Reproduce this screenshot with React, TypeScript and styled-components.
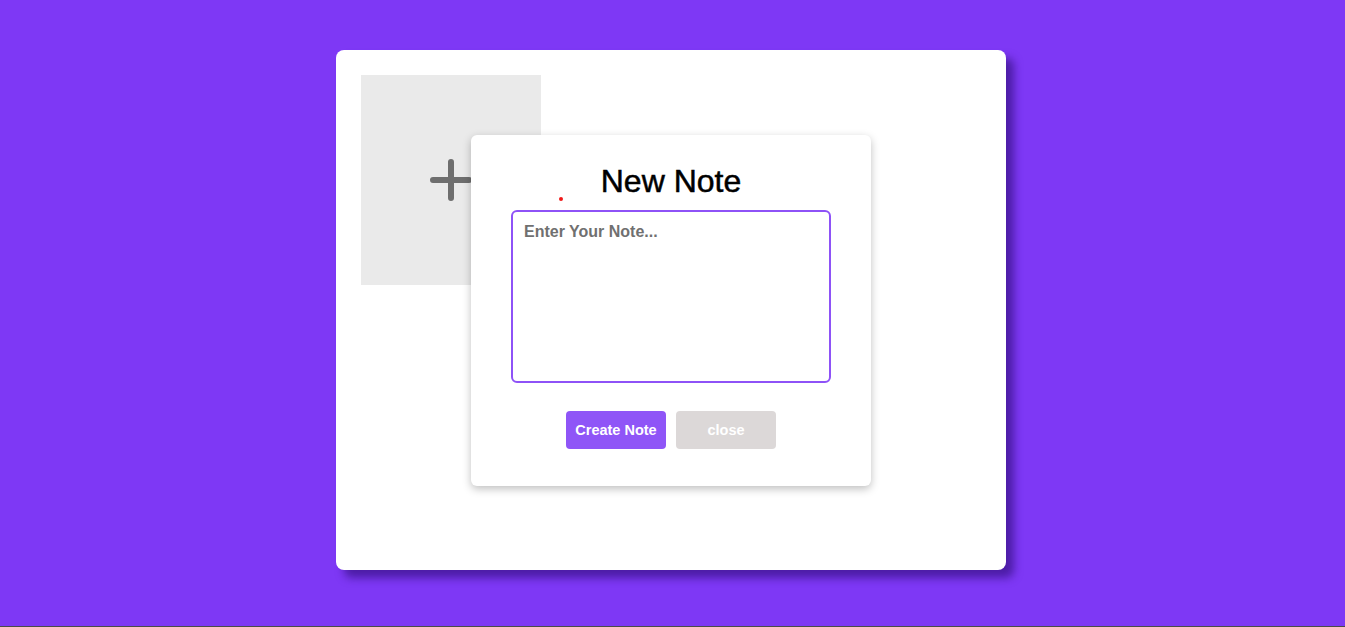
import styled, { createGlobalStyle } from 'styled-components';

const GlobalStyle = createGlobalStyle`
  * {
    box-sizing: border-box;
  }
  body {
    margin: 0;
    font-family: "Liberation Sans", Arial, sans-serif;
    background: #7e38f5;
  }
`;

const Page = styled.div`
  height: 627px;
  padding: 50px 3px 0 0;
  border-bottom: 1px solid #4a4a4a;
  display: flex;
  justify-content: center;
  align-items: flex-start;
`;

const Board = styled.div`
  position: relative;
  width: 670px;
  height: 520px;
  background: #fff;
  border-radius: 8px;
  box-shadow: 8px 8px 8px rgba(60, 20, 140, 0.75);
  padding: 25px;
  display: flex;
  flex-wrap: wrap;
  align-content: flex-start;
  gap: 20px;
`;

const AddTile = styled.button`
  width: 180px;
  height: 210px;
  background: #eaeaea;
  border: none;
  padding: 0;
  display: flex;
  align-items: center;
  justify-content: center;
  cursor: pointer;
`;

const Modal = styled.div`
  position: absolute;
  left: 135px;
  top: 85px;
  width: 400px;
  height: 351px;
  background: #fff;
  border-radius: 6px;
  box-shadow: 0 3px 8px rgba(0, 0, 0, 0.25);
  padding: 26px 40px 0;
  display: flex;
  flex-direction: column;
  align-items: center;
`;

const Title = styled.h2`
  margin: 0 0 9px;
  font-size: 32px;
  font-weight: 400;
  color: #000;
  line-height: 40px;
  -webkit-text-stroke: 0.5px #000;
`;

const Dot = styled.span`
  position: absolute;
  left: 88px;
  top: 62px;
  width: 4px;
  height: 4px;
  border-radius: 50%;
  background: #f01818;
`;

const NoteInput = styled.textarea`
  width: 320px;
  height: 173px;
  border: 2px solid #8e52f7;
  border-radius: 6px;
  padding: 11px 11px;
  font-family: "Liberation Sans", Arial, sans-serif;
  font-size: 16px;
  font-weight: 700;
  resize: none;
  outline: none;
  &::placeholder {
    color: #707070;
  }
`;

const Actions = styled.div`
  display: flex;
  gap: 10px;
  margin-top: 28px;
`;

const ActionButton = styled.button<{ $primary?: boolean }>`
  width: 100px;
  height: 38px;
  border: none;
  border-radius: 4px;
  background: ${(p) => (p.$primary ? '#8f55f7' : '#dcd8d8')};
  color: #fff;
  font-family: "Liberation Sans", Arial, sans-serif;
  font-size: 14.5px;
  font-weight: 700;
  cursor: pointer;
`;

const PlusIcon = () => (
  <svg width="44" height="44" viewBox="0 0 44 44">
    <path
      d="M22 4v36M4 22h36"
      stroke="#6e6e6e"
      strokeWidth="6"
      strokeLinecap="round"
      fill="none"
    />
  </svg>
);

const App = () => {
  return (
    <>
      <GlobalStyle />
      <Page>
        <Board>
          <AddTile aria-label="add note">
            <PlusIcon />
          </AddTile>
          <Modal>
            <Dot />
            <Title>New Note</Title>
            <NoteInput placeholder="Enter Your Note..." />
            <Actions>
              <ActionButton $primary>Create Note</ActionButton>
              <ActionButton>close</ActionButton>
            </Actions>
          </Modal>
        </Board>
      </Page>
    </>
  );
};

export default App;
